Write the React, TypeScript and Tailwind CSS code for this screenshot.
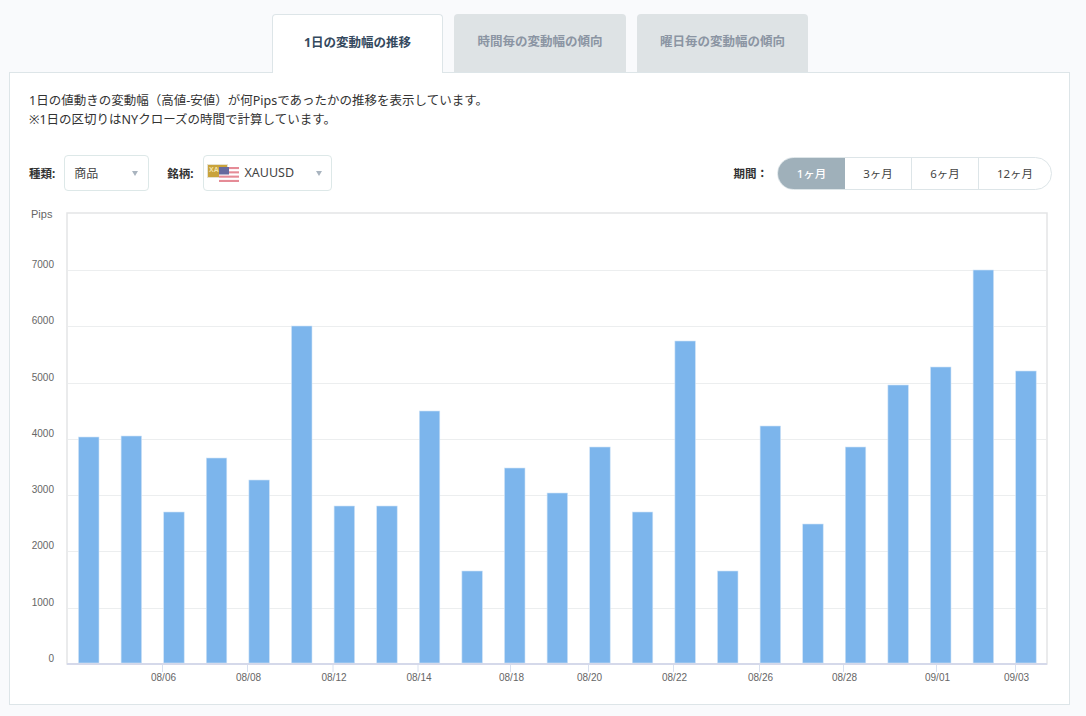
const tops = [437, 436, 512, 458, 480, 326, 506, 506, 411, 571, 468, 493, 447, 512, 341, 571, 426, 524, 447, 385, 367, 270, 371];
const grid: [number, string][] = [[270, "7000"], [326, "6000"], [383, "5000"], [439, "4000"], [495, "3000"], [551, "2000"], [608, "1000"]];
const ticks: [number, string][] = [[162.5, "08/06"], [247.5, "08/08"], [333, "08/12"], [418, "08/14"], [510.5, "08/18"], [588.5, "08/20"], [673.5, "08/22"], [759.5, "08/26"], [843.5, "08/28"], [936.5, "09/01"], [1015.5, "09/03"]];

function Chart() {
  return (
    <svg width="1060" height="505" viewBox="0 205 1060 505" className="block" fontFamily="'Liberation Sans', Arial, sans-serif" fontSize="10" fill="#666">
      <rect x="67" y="213" width="980" height="451" fill="#fff" stroke="#e4e5e6" strokeWidth="1.5" />
      {grid.map(([y, label]) => (
        <g key={label}>
          <line x1="68" x2="1046" y1={y + 0.5} y2={y + 0.5} stroke="#eceeef" />
          <text x="54" y={y - 2} textAnchor="end">{label}</text>
        </g>
      ))}
      <text x="31" y="218" fontSize="11">Pips</text>
      <text x="54" y="662" textAnchor="end">0</text>
      {tops.map((top, i) => (
        <rect key={i} x={78.5 + 42.6 * i} y={top} width="20.5" height={663 - top} fill="#7cb5ec" stroke="#cfe3f7" strokeWidth="0.6" />
      ))}
      <line x1="67" x2="1047" y1="664" y2="664" stroke="#d5d9ea" strokeWidth="2" />
      {ticks.map(([x, label]) => (
        <g key={label}>
          <line x1={x} x2={x} y1="665" y2="672" stroke="#d8e0ef" />
          <text x={x + 1} y="681" textAnchor="middle">{label}</text>
        </g>
      ))}
    </svg>
  );
}

function Flag() {
  return (
    <svg width="33" height="18" viewBox="0 0 33 18" className="block">
      <rect x="0.5" y="0.5" width="20" height="13" fill="#c9a33b" stroke="#e6e2d0" />
      <text x="2" y="8" fontSize="7" fill="#f3e4ac" fontFamily="'Liberation Sans', sans-serif" fontWeight="700">XAU</text>
      <rect x="12" y="3" width="20" height="14" fill="#fff" />
      {[0, 2, 4, 6].map((r) => (
        <rect key={r} x="12" y={3 + r * 2.15} width="20" height="2.1" fill="#e58b96" />
      ))}
      <rect x="12" y="3" width="10" height="7.5" fill="#666a9e" />
    </svg>
  );
}

function Caret() {
  return <span className="h-0 w-0 border-x-[3.5px] border-t-[5px] border-x-transparent border-t-[#a9b4bf]" />;
}

export default function App() {
  const font = { fontFamily: "'Noto Sans', 'Noto Sans CJK JP', sans-serif" };
  return (
    <div style={font} className="h-[716px] w-[1086px] overflow-hidden bg-[#f9fafc] pl-[9px] pt-[14px] text-xs text-[#333]">
      <div className="flex w-[1061px] justify-center">
        <div className="ml-[1px] flex gap-[11px]">
          <div className="relative z-10 -mb-[1px] flex h-[59px] w-[171px] items-center justify-center rounded-t border border-b-0 border-[#dde5e8] bg-white pb-[2px] text-[12.5px] font-bold text-[#34495e]">1日の変動幅の推移</div>
          <div className="flex h-[58px] w-[172px] items-center justify-center rounded-t bg-[#dee3e5] pb-[2px] text-[12.5px] font-bold text-[#8b95a3]">時間毎の変動幅の傾向</div>
          <div className="flex h-[58px] w-[171px] items-center justify-center rounded-t bg-[#dee3e5] pb-[2px] text-[12.5px] font-bold text-[#8b95a3]">曜日毎の変動幅の傾向</div>
        </div>
      </div>
      <div className="h-[633px] w-[1061px] border border-[#dde5e8] bg-white">
        <div className="pl-[19px] pt-[18px] text-[12.5px] leading-[19px] text-[#333]">
          <p>1日の値動きの変動幅（高値-安値）が何Pipsであったかの推移を表示しています。</p>
          <p>※1日の区切りはNYクローズの時間で計算しています。</p>
        </div>
        <div className="mt-[26px] flex h-[36px] items-center justify-between pl-[19px] pr-[17px]">
          <div className="flex items-center">
            <span className="mr-[9px] pt-[1px] text-[11.5px] font-bold">種類:</span>
            <div className="flex h-[36px] w-[85px] items-center justify-between rounded border border-[#dde8e8] pl-[9px] pr-[10px]">
              <span className="pt-[1px] text-xs text-[#444]">商品</span>
              <Caret />
            </div>
            <span className="ml-[18px] mr-[9px] pt-[1px] text-[11.5px] font-bold">銘柄:</span>
            <div className="ml-[1px] flex h-[36px] w-[129px] items-center justify-between rounded border border-[#dde8e8] pl-[3px] pr-[9px]">
              <div className="flex items-center gap-[4px]">
                <Flag />
                <span className="pt-[1px] text-[12.5px] text-[#444]">XAUUSD</span>
              </div>
              <Caret />
            </div>
          </div>
          <div className="flex items-center">
            <span className="mr-[9px] pt-[1px] text-[11.5px] font-bold">期間：</span>
            <div className="flex h-[33px] w-[275px] overflow-hidden rounded-full border border-[#dde5e8] pt-0 text-[11.5px]">
              <div className="flex w-[67px] items-center justify-center bg-[#9fb0ba] pt-[1px] font-medium text-white">1ヶ月</div>
              <div className="flex w-[67px] items-center justify-center border-r border-[#dde5e8] pt-[1px] text-[#444]">3ヶ月</div>
              <div className="flex w-[67px] items-center justify-center border-r border-[#dde5e8] pt-[1px] text-[#444]">6ヶ月</div>
              <div className="flex flex-1 items-center justify-center pt-[1px] text-[#444]">12ヶ月</div>
            </div>
          </div>
        </div>
        <div className="-ml-[10px] mt-[14px]">
          <Chart />
        </div>
      </div>
    </div>
  );
}
